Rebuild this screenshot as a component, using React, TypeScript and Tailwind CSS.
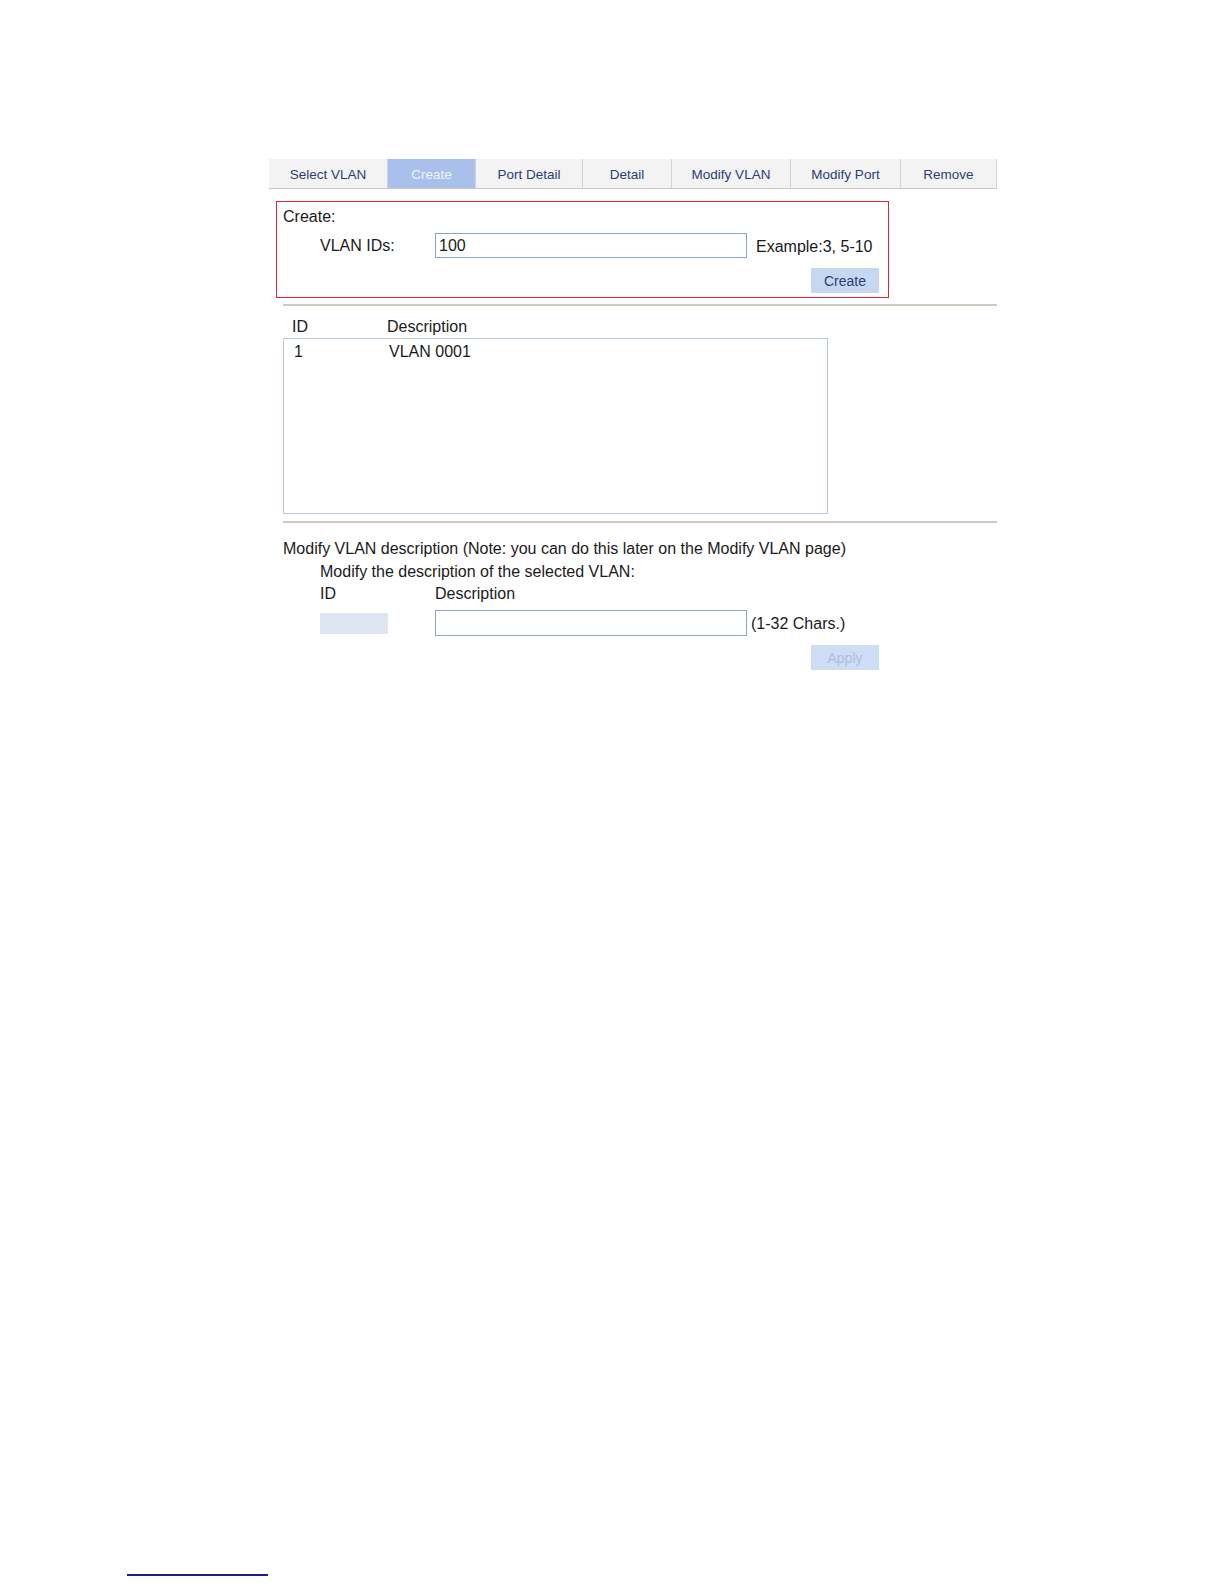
const tabs = [
  { label: "Select VLAN", w: "w-[119px]" },
  { label: "Create", w: "w-[88px]", active: true },
  { label: "Port Detail", w: "w-[107px]" },
  { label: "Detail", w: "w-[89px]" },
  { label: "Modify VLAN", w: "w-[119px]" },
  { label: "Modify Port", w: "w-[110px]" },
  { label: "Remove", w: "w-[96px]" },
];

const Tabs = () => (
  <div className="flex h-[30px] border-b border-[#c9c9c9]">
    {tabs.map((t) => (
      <div
        key={t.label}
        className={`${t.w} flex items-center justify-center border-r border-[#d4d4d4] text-[13.5px] ${
          t.active ? "bg-[#a9c1ea] text-[#eef3fb]" : "bg-[#f3f3f3] text-[#2b3d7a]"
        }`}
      >
        <span className="pt-[4px]">{t.label}</span>
      </div>
    ))}
  </div>
);

const CreateBox = () => (
  <div className="ml-[7px] mt-[12px] w-[613px] h-[97px] border border-[#e0262e] pl-[6px] pt-[5px]">
    <div className="h-[19px] leading-[19px]">Create:</div>
    <div className="flex items-center mt-[6px]">
      <span className="ml-[37px] w-[115px]">VLAN IDs:</span>
      <input
        defaultValue="100"
        className="w-[312px] h-[25px] border border-[#8ea4c3] px-[3px] text-[16px] outline-none"
      />
      <span className="ml-[9px] mt-[3px]">Example:3, 5-10</span>
    </div>
    <div className="mt-[9px] ml-[528px]">
      <button className="w-[68px] h-[25px] bg-[#c6d7f2] text-[14px] text-[#2b3d7a] pt-[2px]">Create</button>
    </div>
  </div>
);

const Separator = ({ mt }: { mt: string }) => (
  <div className={`${mt} ml-[14px] w-[714px] h-[2px] bg-[#cbcbc1]`} />
);

const VlanList = () => (
  <div className="ml-[14px]">
    <div className="flex h-[20px] mt-[11px] leading-[20px]">
      <span className="ml-[9px] w-[95px]">ID</span>
      <span>Description</span>
    </div>
    <div className="mt-[1px] w-[545px] h-[176px] border border-[#b6c9de]">
      <div className="flex mt-[3px] leading-[20px]">
        <span className="ml-[10px] w-[95px]">1</span>
        <span>VLAN 0001</span>
      </div>
    </div>
  </div>
);

const ModifySection = () => (
  <div className="ml-[14px] mt-[16px]">
    <div className="leading-[20px]">Modify VLAN description (Note: you can do this later on the Modify VLAN page)</div>
    <div className="ml-[37px] mt-[3px] leading-[20px]">Modify the description of the selected VLAN:</div>
    <div className="flex ml-[37px] mt-[2px] leading-[20px]">
      <span className="w-[115px]">ID</span>
      <span>Description</span>
    </div>
    <div className="flex items-center ml-[37px] mt-[5px]">
      <div className="w-[68px] h-[21px] bg-[#dfe5f0] mt-[2px]" />
      <input className="ml-[47px] w-[312px] h-[26px] border border-[#8ea4c3] outline-none" />
      <span className="ml-[4px] mt-[3px]">(1-32 Chars.)</span>
    </div>
    <div className="ml-[528px] mt-[9px]">
      <button className="w-[68px] h-[25px] bg-[#cfdcf5] text-[14px] text-[#aebedb] pt-[2px]">Apply</button>
    </div>
  </div>
);

export default function App() {
  return (
    <div
      className="flex flex-col h-[1584px] w-[1224px] bg-white text-[16px] text-[#1a1a1a]"
      style={{ fontFamily: '"Liberation Sans", Arial, sans-serif' }}
    >
      <div className="ml-[269px] mt-[159px] w-[728px]">
        <Tabs />
        <CreateBox />
        <Separator mt="mt-[6px]" />
        <VlanList />
        <Separator mt="mt-[7px]" />
        <ModifySection />
      </div>
      <div className="mt-auto mb-[8px] ml-[127px] w-[141px] h-[2px] bg-[#1c1c8a]" />
    </div>
  );
}
